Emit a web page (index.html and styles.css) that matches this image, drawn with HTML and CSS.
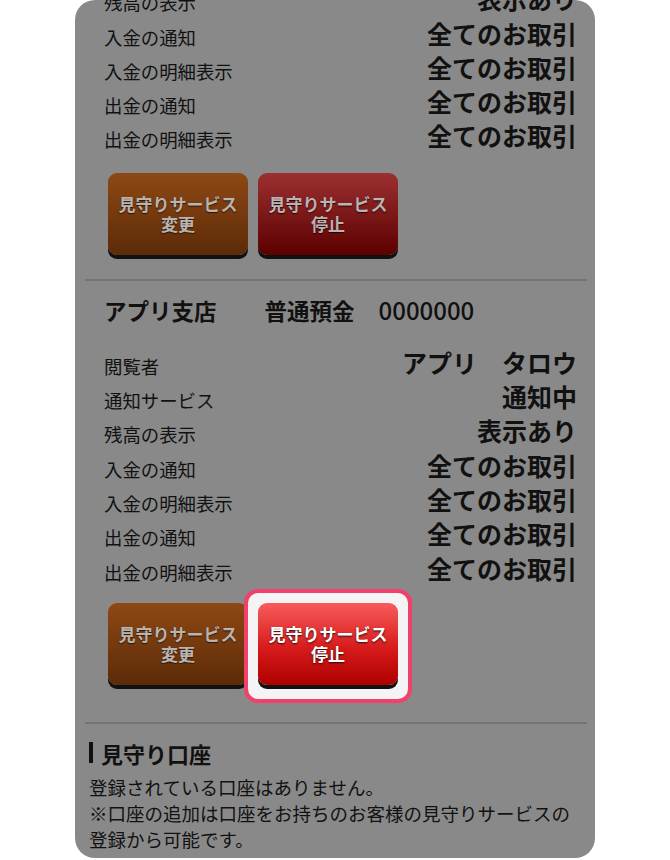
FILE: index.html
```html
<!DOCTYPE html>
<html lang="ja">
<head>
    <meta charset="UTF-8">
    <title>見守りサービス</title>
    <link rel="stylesheet" href="styles.css">
</head>
<body>
    <div class="screen">
        <div class="scroll">

            <div class="account">
                <dl class="rows">
                    <div class="row"><dt>残高の表示</dt><dd>表示あり</dd></div>
                    <div class="row"><dt>入金の通知</dt><dd>全てのお取引</dd></div>
                    <div class="row"><dt>入金の明細表示</dt><dd>全てのお取引</dd></div>
                    <div class="row"><dt>出金の通知</dt><dd>全てのお取引</dd></div>
                    <div class="row"><dt>出金の明細表示</dt><dd>全てのお取引</dd></div>
                </dl>
                <div class="actions">
                    <button class="btn btn-change dim">見守りサービス<br>変更</button>
                    <button class="btn btn-stop dim">見守りサービス<br>停止</button>
                </div>
            </div>

            <hr class="divider">

            <div class="account last">
                <h2 class="acc-title"><span class="branch">アプリ支店</span><span class="kind">普通預金</span><span class="num">0000000</span></h2>
                <dl class="rows">
                    <div class="row"><dt>閲覧者</dt><dd>アプリ　タロウ</dd></div>
                    <div class="row"><dt>通知サービス</dt><dd>通知中</dd></div>
                    <div class="row"><dt>残高の表示</dt><dd>表示あり</dd></div>
                    <div class="row"><dt>入金の通知</dt><dd>全てのお取引</dd></div>
                    <div class="row"><dt>入金の明細表示</dt><dd>全てのお取引</dd></div>
                    <div class="row"><dt>出金の通知</dt><dd>全てのお取引</dd></div>
                    <div class="row"><dt>出金の明細表示</dt><dd>全てのお取引</dd></div>
                </dl>
                <div class="actions">
                    <button class="btn btn-change dim">見守りサービス<br>変更</button>
                    <div class="spot">
                        <button class="btn btn-stop">見守りサービス<br>停止</button>
                    </div>
                </div>
            </div>

            <hr class="divider">

            <div class="watch">
                <h2 class="watch-title">見守り口座</h2>
                <p class="note">登録されている口座はありません。<br>※口座の追加は口座をお持ちのお客様の見守りサービスの登録から可能です。</p>
            </div>

        </div>
    </div>
</body>
</html>
```

FILE: styles.css
```css
body {
    margin: 0;
    background: #fff;
    font-family: "Noto Sans CJK JP", "Noto Sans", sans-serif;
    color: #111;
}

.screen {
    width: 520px;
    height: 858px;
    margin: 0 auto;
    border-radius: 20px;
    overflow: hidden;
    background: #898989;
}

/* page is scrolled down a little */
.scroll {
    margin-top: -21px;
}

.account {
    padding: 0 18px 0 29px;
}

.rows {
    margin: 0;
}

.row {
    display: flex;
    justify-content: space-between;
    align-items: flex-end;
    height: 34.3px;
}

.row dt {
    font-size: 18.4px;
    line-height: 21px;
}

.row dd {
    margin: 0;
    font-size: 25px;
    font-weight: bold;
    line-height: 30px;
}

.actions {
    display: flex;
    gap: 10px;
    margin-top: 23px;
    padding-left: 4px;
}

.btn {
    width: 140px;
    height: 82px;
    padding: 0;
    border: none;
    border-radius: 9px;
    box-shadow: 0 4px 0 #111;
    font-family: inherit;
    font-size: 17px;
    font-weight: bold;
    line-height: 20px;
    color: #fff;
    text-shadow: 0 1px 2px rgba(0,0,0,.8);
}

.btn-change.dim {
    background: linear-gradient(#8e4814, #5c2b08);
    color: #b9b4b0;
    text-shadow: 0 1px 1px #2a1405;
}

.btn-stop.dim {
    background: linear-gradient(#9c3031, #5c0000);
    color: #b9b4b4;
    text-shadow: 0 1px 1px #2a0000;
}

.btn-stop {
    background: linear-gradient(#f85b5b, #d71b1b 55%, #ae0000);
}

.spot {
    position: relative;
    z-index: 0;
}

.spot::before {
    content: "";
    position: absolute;
    top: -14px;
    left: -14px;
    right: -14px;
    bottom: -18px;
    z-index: -1;
    background: #f4f4f4;
    border: 4px solid #f0406b;
    border-radius: 14px;
}

.divider {
    height: 2px;
    margin: 24px 8px 0 10px;
    border: none;
    background: #747474;
}

.account.last .actions {
    margin-top: 20px;
    margin-bottom: 37px;
}

.acc-title {
    margin: 14px 0 17px;
    font-size: 22.5px;
    line-height: 30px;
}

.branch {
    margin-right: 48px;
}

.kind {
    margin-right: 24px;
}

.num {
    font-size: 24px;
    font-weight: 500;
}

.watch {
    padding: 0 14px;
}

.watch-title {
    display: flex;
    align-items: center;
    gap: 8px;
    margin: 14px 0 0;
    font-size: 22px;
    line-height: 30px;
}

.watch-title::before {
    content: "";
    width: 4px;
    height: 21px;
    background: #111;
}

.note {
    margin: 6px 0 0;
    font-size: 18.5px;
    line-height: 26px;
}
```
